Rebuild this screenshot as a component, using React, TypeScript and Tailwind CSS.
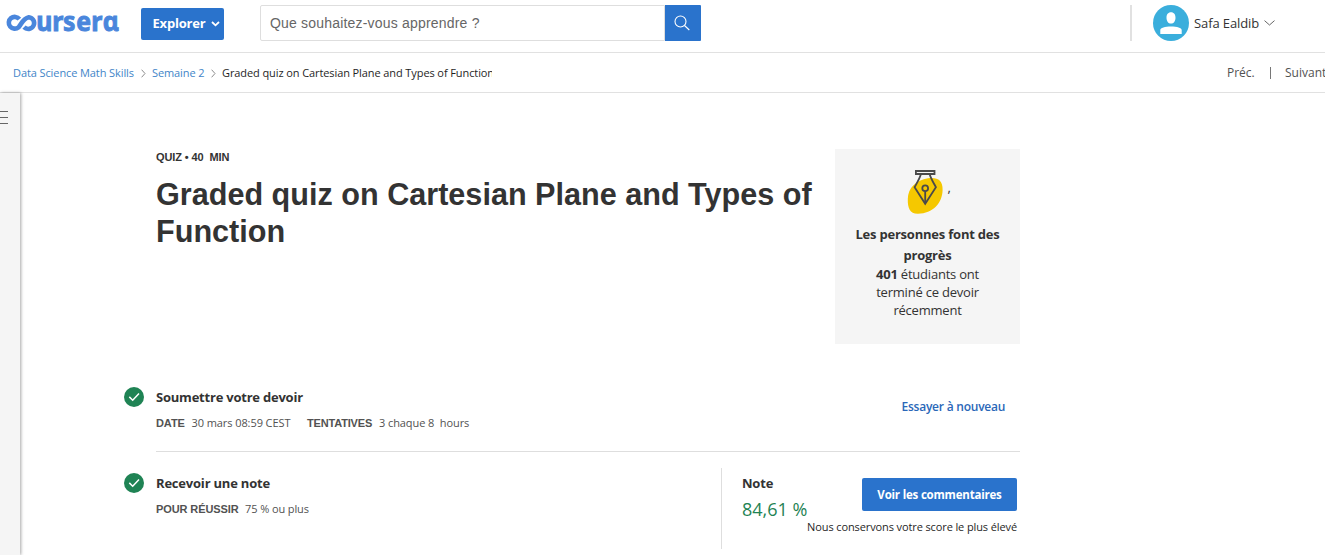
import React from 'react';

function Logo() {
  return (
    <svg width="120" height="20" viewBox="0 0 120 20" className="shrink-0 overflow-visible" aria-label="coursera">
      <path
        d="M14.400 6.200 A5.900 5.900 0 1 0 13.600 14.200 C16.500 11.500 17.500 5.500 23.800 4.200 A5.900 5.900 0 1 1 19 14.200"
        fill="none"
        stroke="#4a86dc"
        strokeWidth="4.6"
      />
      <text
        transform="scale(0.92 1)"
        y="17.500"
        x="33.900 51.400 63 77.400 93.800 106.200"
        fill="#4a86dc"
        stroke="#4a86dc"
        strokeWidth="0.9"
        className="font-['Noto_Sans',sans-serif] text-[27px] font-bold"
      >
        urserɑ
      </text>
    </svg>
  );
}

function Chevron({ className }: { className?: string }) {
  return (
    <svg width="5" height="9" viewBox="0 0 5 9" className={className} fill="none" stroke="#8c8c8c">
      <path d="M.6 .7 4 4.5 .6 8.3" />
    </svg>
  );
}

function Check() {
  return (
    <svg width="20" height="20" viewBox="0 0 20 20" className="mr-3 shrink-0">
      <circle cx="10" cy="10" r="10" fill="#1f8354" />
      <path d="M5.3 9.9 8.7 13.2 15 6.4" fill="none" stroke="#fff" strokeWidth="1.5" />
    </svg>
  );
}

function Nib() {
  return (
    <svg width="38" height="46" viewBox="0 0 38 46" className="block">
      <path
        d="M22 8.3C31 6.8 37 10 36.6 20C36.300 33 27 43.500 12 43.800C4 44 1.500 38 1.800 29C2 18 10 10.300 22 8.300Z"
        fill="#f5c800"
      />
      <g fill="none" stroke="#4a4a4a" strokeWidth="1.8">
        <path d="M9.900 1H28.500V4H9.900Z" />
        <path d="M14.800 4.500C13.500 9 10.800 13 8.600 17.200L19.200 33.800 29.900 17.200C27.700 13 25 9 23.800 4.500" />
        <circle cx="19.200" cy="18.300" r="2.900" />
        <path d="M19.200 21.500V33" />
      </g>
    </svg>
  );
}

export default function App() {
  return (
    <div className="flex h-[555px] w-[1325px] flex-col overflow-hidden bg-white font-['Open_Sans',sans-serif] text-[#333] whitespace-nowrap">
      <header className="flex h-[53px] shrink-0 items-start border-b border-[#e1e1e1] pl-[5px]">
        <div className="mt-[13px] w-[116px]">
          <Logo />
        </div>
        <button className="mt-2 ml-5 flex h-8 w-[83px] items-center rounded-[2px] bg-[#2a73cc] pl-[11.500px] text-[13px] font-bold tracking-[-0.2px] text-white">
          <span className="w-[53px]">Explorer</span>
          <svg width="9" height="6" viewBox="0 0 9 6" className="ml-[5px]" fill="none" stroke="#fff" strokeWidth="1.8">
            <path d="M1 1 4.500 4.300 8 1" />
          </svg>
        </button>
        <div className="mt-[5px] ml-9 flex h-9 w-[441px]">
          <div className="w-[405px] rounded-l-[2px] border border-[#dedede] pl-[9px] font-['Liberation_Sans',sans-serif] text-[14px] leading-[34px] tracking-[0.19px] text-[#666]">
            Que souhaitez-vous apprendre ?
          </div>
          <button className="flex w-9 items-center justify-center rounded-r-[1px] bg-[#2a73cc]">
            <svg width="16" height="16" viewBox="0 0 16 16" className="-translate-x-[1px]" fill="none" stroke="#fff" strokeWidth="1.1">
              <circle cx="6.500" cy="6.500" r="5.500" />
              <path d="M10.500 10.500 15.300 15" />
            </svg>
          </button>
        </div>
        <div className="mt-[5px] ml-[429px] h-9 w-0.5 bg-[#e1e1e1]" />
        <div className="mt-[5px] ml-[21px] flex h-9 items-center">
          <svg width="36" height="36" viewBox="0 0 36 36">
            <circle cx="18" cy="18" r="18" fill="#3aaedc" />
            <path
              d="M18 7.200C21 7.200 22.500 9.500 22.500 12.700C22.500 16 20.700 18.600 18 18.600S13.500 16 13.500 12.700C13.500 9.500 15 7.200 18 7.200ZM7.300 29V25C7.300 22.700 12 21.400 18 21.400S28.700 22.700 28.700 25V29Z"
              fill="#fff"
            />
          </svg>
          <span className="ml-[5px] w-[65px] pt-px text-[13px] tracking-[-0.1px]">Safa Ealdib</span>
          <svg width="11" height="6" viewBox="0 0 11 6" className="ml-[5px]" fill="none" stroke="#555" strokeWidth="0.900">
            <path d="M.5 .6 5.500 5 10.500 .6" />
          </svg>
        </div>
      </header>

      <nav className="flex h-10 shrink-0 items-center border-b border-[#e1e1e1] pt-px pl-[13px] text-[11px] tracking-[-0.095px] text-[#4285c8]">
        <span className="w-[121px] shrink-0">Data Science Math Skills</span>
        <Chevron className="ml-[7px] shrink-0" />
        <span className="ml-1.5 w-[53px] shrink-0">Semaine 2</span>
        <Chevron className="ml-[6px] shrink-0" />
        <span className="ml-1.5 w-[270px] shrink-0 overflow-hidden text-[#1f1f1f]">Graded quiz on Cartesian Plane and Types of Function</span>
        <span className="ml-[735px] w-[29px] shrink-0 text-[12px] tracking-normal text-[#525252]">Préc.</span>
        <span className="ml-3.5 h-3 w-px shrink-0 bg-[#777]" />
        <span className="ml-3.5 shrink-0 text-[12px] tracking-normal text-[#525252]">Suivant</span>
      </nav>

      <div className="flex min-h-0 flex-1">
        <aside className="w-[19.500px] shrink-0 bg-[#f5f5f5] pt-[18px] shadow-[1px_0_3px_rgba(0,0,0,0.35)]">
          <svg width="8" height="13" viewBox="0 0 8 13" stroke="#666" strokeWidth="1">
            <path d="M0 .5H8M0 6.500H8M0 12.500H8" />
          </svg>
        </aside>

        <main className="ml-[104.500px] w-[896px] shrink-0">
          <section className="flex h-[251px] pt-14 pl-8">
            <div className="w-[679px]">
              <p className="font-['Liberation_Sans',sans-serif] text-[11px] leading-4 font-bold tracking-[-0.1px] whitespace-pre">QUIZ • 40  MIN</p>
              <h1 className="mt-[11px] font-['Liberation_Sans',sans-serif] text-[30.600px] leading-[37px] font-bold">
                Graded quiz on Cartesian Plane and Types of
                <br />
                Function
              </h1>
            </div>
            <div className="flex h-[195px] w-[185px] flex-col items-center bg-[#f5f5f5] pt-[21px] text-center text-[13px] tracking-[-0.21px]">
              <div className="flex h-[54px] items-start pl-[2px]">
                <Nib />
                <span className="mt-2 ml-[3px] text-[13px]">,</span>
              </div>
              <p className="leading-[21px] font-bold">
                Les personnes font des
                <br />
                progrès
              </p>
              <p className="-mt-px leading-[18px]">
                <b>401</b> étudiants ont
                <br />
                terminé ce devoir
                <br />
                récemment
              </p>
            </div>
          </section>

          <section className="flex h-[107px] pt-[43px]">
            <Check />
            <div className="h-[65px] w-[864px] shrink-0 border-b border-[#dedede]">
              <div className="flex">
                <div className="w-[745.500px]">
                  <h2 className="text-[13px] leading-5 font-bold tracking-[-0.22px]">Soumettre votre devoir</h2>
                  <div className="mt-1.5 flex text-[11px] leading-5 tracking-[-0.08px] text-[#525252]">
                    <span className="w-[35.500px] font-['Liberation_Sans',sans-serif] font-bold">DATE</span>
                    <span className="w-[115.500px]">30 mars 08:59 CEST</span>
                    <span className="w-[72px] font-['Liberation_Sans',sans-serif] font-bold tracking-[-0.17px]">TENTATIVES</span>
                    <span className="whitespace-pre">3 chaque 8  hours</span>
                  </div>
                </div>
                <a className="mt-2.5 text-[12px] leading-5 font-semibold tracking-[-0.23px] text-[#2a67b8]">Essayer à nouveau</a>
              </div>
            </div>
          </section>

          <section className="flex pt-[22px]">
            <Check />
            <div className="w-[565px]">
              <h2 className="text-[13px] leading-5 font-bold tracking-[-0.2px]">Recevoir une note</h2>
              <div className="mt-1.5 flex text-[11px] leading-5 tracking-[-0.1px] text-[#525252]">
                <span className="w-[89px] font-['Liberation_Sans',sans-serif] font-bold">POUR RÉUSSIR</span>
                <span>75 % ou plus</span>
              </div>
            </div>
            <div className="-mt-[5px] flex h-[81px] w-[296px] border-l border-[#dedede] pl-5">
              <div className="w-[65px] pt-[5px]">
                <h2 className="text-[13px] leading-5 font-bold tracking-[-0.2px]">Note</h2>
                <p className="mt-[2px] text-[18px] leading-7 text-[#1f8354]">84,61 %</p>
              </div>
              <div className="flex w-[210px] flex-col items-end pt-2.5">
                <button className="h-[33px] w-[155px] rounded-[2px] bg-[#2a73cc] text-center text-[11.500px] font-bold tracking-[-0.2px] text-white">Voir les commentaires</button>
                <p className="mt-2 text-[11px] leading-4 tracking-[-0.11px] text-[#1f1f1f]">Nous conservons votre score le plus élevé</p>
              </div>
            </div>
          </section>
        </main>
      </div>
    </div>
  );
}
